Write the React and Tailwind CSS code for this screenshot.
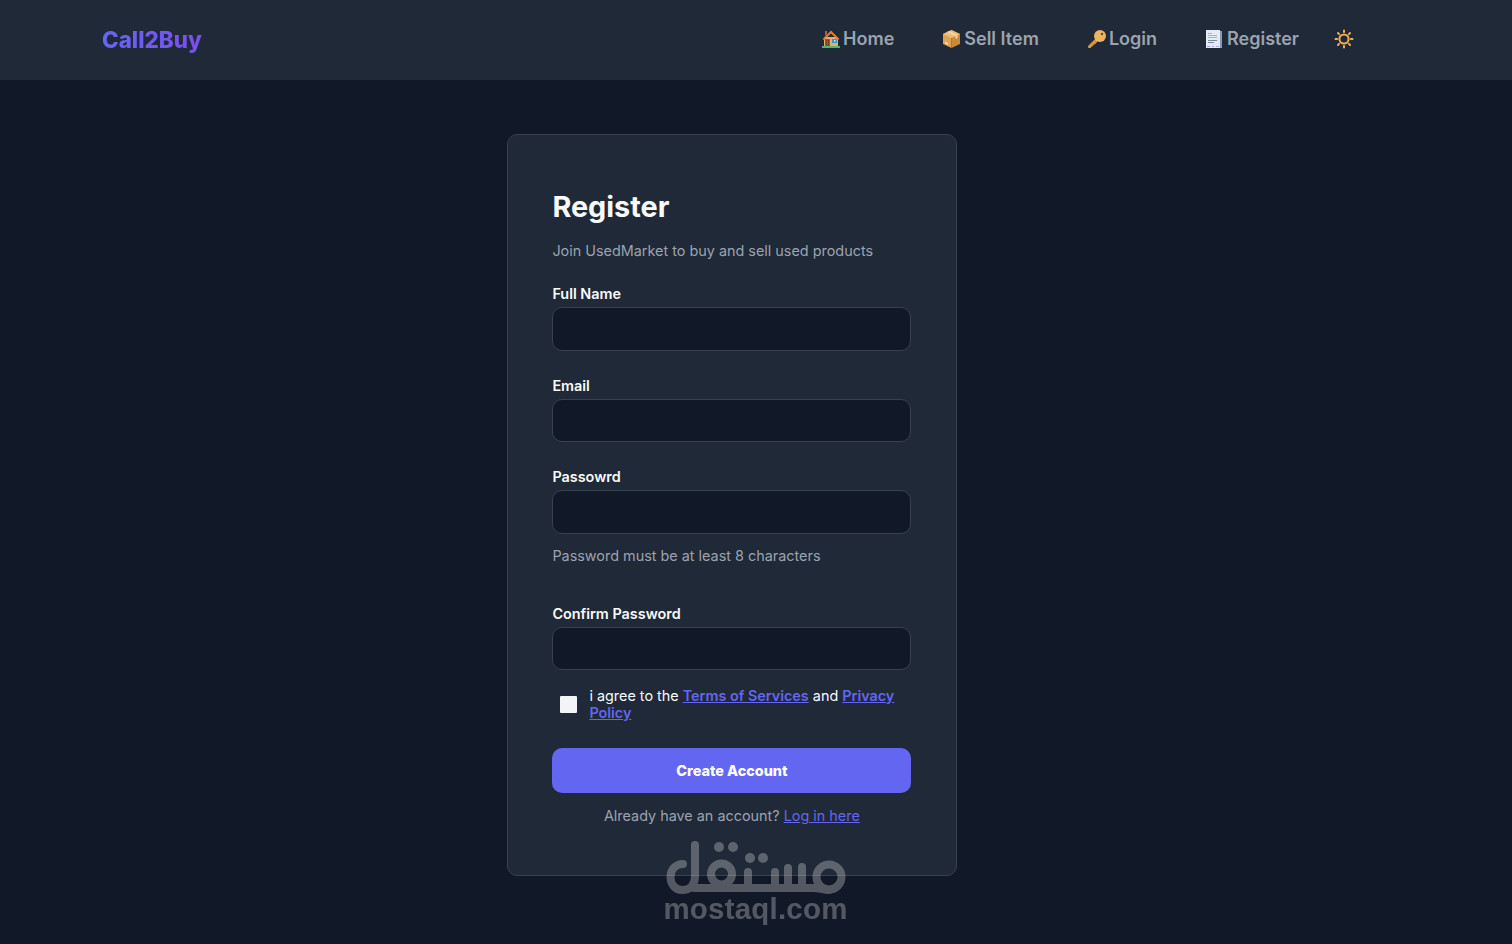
function Field({ label, hint, className = '' }) {
  return (
    <div className={className}>
      <label className="block text-[14.4px] leading-[17px] font-semibold text-[#f9fafb] mb-[5px]">{label}</label>
      <input className="block w-full h-[43.5px] rounded-[10px] border border-[#374151] bg-[#111827] px-3 outline-none" />
      {hint && <p className="mt-[11px] text-[14.4px] leading-[21px] text-[#9ca3af]">{hint}</p>}
    </div>
  )
}

function HouseIcon() {
  return (
    <svg width="20" height="20" viewBox="0 0 20 20">
      <rect x="1" y="17" width="18" height="2" fill="#4fb56f" />
      <rect x="3" y="8" width="14" height="9" fill="#e6ae68" />
      <path d="M1.5 10 10 1.5l8.5 8.5-1.5 1L10 4.5 3 11z" fill="#e9782f" />
      <path d="M4 2h2v3L4 7z" fill="#c9582a" />
      <rect x="4" y="10" width="5" height="7" fill="#8d5a34" />
      <path d="M5 11h1v1H5zM7 11h1v1H7zM5 13h1v1H5zM7 13h1v1H7zM5 15h1v1H5zM7 15h1v1H7z" fill="#5c3821" />
      <rect x="11" y="10" width="5" height="4" fill="#3f8fd6" />
      <rect x="13" y="11" width="1.5" height="1.5" fill="#d9ecfb" />
    </svg>
  )
}

function BoxIcon() {
  return (
    <svg width="19" height="20" viewBox="0 0 19 20">
      <path d="M9.5 1 18 5v10l-8.5 4z" fill="#c98a3c" />
      <path d="M9.5 1 1 5v10l8.5 4z" fill="#e0a352" />
      <path d="M1 5l8.5 4L18 5 9.5 1z" fill="#eebd78" />
      <path d="M5 3 13.5 7v3l2-1V6L7 2z" fill="#f3d5a4" />
      <path d="M9.5 9v10" stroke="#a96f2b" strokeWidth=".6" />
      <path d="M3 12.5l3 1.5v2l-3-1.5z" fill="#f4e6cf" />
    </svg>
  )
}

function KeyIcon() {
  return (
    <svg width="20" height="20" viewBox="0 0 20 20">
      <path d="M8.5 9.5 1 17l.3 2h2.5l.7-1.4 1.5-.3.4-1.6 1.6-.4L11 12z" fill="#d9963e" />
      <circle cx="13" cy="7" r="6" fill="#efb45f" />
      <circle cx="15" cy="5" r="1.2" fill="#6b4a20" />
    </svg>
  )
}

function ReceiptIcon() {
  return (
    <svg width="18" height="20" viewBox="0 0 18 20">
      <rect x="13" y="2" width="4" height="17" fill="#8f98a8" />
      <rect x="1" y="1" width="14" height="18" fill="#e3ebf6" />
      <path d="M3 4h4v1H3zM3 6h9v1H3zM3 8h9v1H3z" fill="#a8b4c8" />
      <path d="M3 11h9v1H3zM3 13h6v1H3z" fill="#7f8a9e" />
      <path d="M2 17h3v1H2zM7 17h2v1H7z" fill="#b49be0" />
      <path d="M11 17h3v1h-3z" fill="#9fb6e8" />
    </svg>
  )
}

function NavItem({ icon, label }) {
  return (
    <a className="flex items-center text-[18px] leading-[28px] font-semibold text-[#9ca3af]">
      <span className="flex w-[22px] shrink-0">{icon}</span>
      <span>{label}</span>
    </a>
  )
}

function SunIcon() {
  return (
    <svg width="20" height="20" viewBox="0 0 20 20" fill="none" stroke="#f2ae50" strokeWidth="2" strokeLinecap="round" className="-ml-[13px]">
      <circle cx="10" cy="10" r="4.6" />
      <path d="M10 1.5v1.6M10 16.9v1.6M1.5 10h1.6M16.9 10h1.6M4 4l1.1 1.1M14.9 14.9 16 16M4 16l1.1-1.1M14.9 5.1 16 4" />
    </svg>
  )
}

function Watermark() {
  return (
    <div className="absolute left-[664px] top-[838px] w-[183px] flex flex-col items-center pointer-events-none opacity-30">
      <svg width="183" height="58" viewBox="0 0 183 58" fill="none" stroke="#ededed" strokeWidth="8" strokeLinecap="round" strokeLinejoin="round">
        <path d="M31 7V38C31 47 26 52 18 52C11 52 6.5 46 6.5 39C6.5 31 12 26 19 26" />
        <circle cx="57.5" cy="36" r="10.5" />
        <path d="M30 50H150C156 50 160 52 165 52" />
        <path d="M84 34V50M111 34V50M124 30V50M138 29V50" />
        <circle cx="165" cy="39" r="12.5" />
        <g fill="#ededed" stroke="none">
          <circle cx="55" cy="9" r="5" />
          <circle cx="69" cy="9" r="5" />
          <circle cx="86" cy="20" r="5" />
          <circle cx="99" cy="20" r="5" />
        </g>
      </svg>
      <span className="-mt-px whitespace-nowrap font-['Liberation_Sans',sans-serif] text-[29.4px] leading-[28px] font-bold tracking-[0.25px] text-[#ededed]">mostaql.com</span>
    </div>
  )
}

export default function App() {
  return (
    <div className="relative min-h-[944px] bg-[#111827] font-['Inter',sans-serif]">
      <header className="h-20 bg-[#1f2937] flex items-center justify-between pl-[102px] pr-[158px]">
        <span className="text-[22.4px] leading-[32px] font-extrabold bg-linear-to-r from-[#6366f1] to-[#7c4df0] bg-clip-text text-transparent">Call2Buy</span>
        <nav className="flex items-center gap-12 -mt-[2px]">
          <NavItem icon={<HouseIcon />} label="Home" />
          <NavItem icon={<BoxIcon />} label="Sell Item" />
          <NavItem icon={<KeyIcon />} label="Login" />
          <NavItem icon={<ReceiptIcon />} label="Register" />
          <SunIcon />
        </nav>
      </header>

      <main className="flex justify-center pt-[54px] pr-[48px]">
        <div className="w-[450px] h-[742px] rounded-[10px] border border-[#374151] bg-[#1f2937] pl-[44.4px] pr-[44.6px] pt-[54px]">
          <h1 className="text-[28.8px] leading-[36px] font-bold text-[#f9fafb]">Register</h1>
          <p className="mt-[15px] text-[14.4px] leading-[21px] text-[#9ca3af]">Join UsedMarket to buy and sell used products</p>
          <Field label="Full Name" className="mt-[24.25px]" />
          <Field label="Email" className="mt-[26px]" />
          <Field label="Passowrd" hint="Password must be at least 8 characters" className="mt-[26px]" />
          <Field label="Confirm Password" className="mt-[38.75px]" />

          <div className="mt-[17px] flex items-center">
            <span className="ml-2 w-[17px] h-[17px] shrink-0 bg-[#f3f4f6] rounded-[1px]" />
            <p className="ml-3 text-[14.4px] leading-[17px] text-[#f9fafb]">
              i agree to the <a className="font-semibold text-[#6366f1] underline">Terms of Services</a> and <a className="font-semibold text-[#6366f1] underline">Privacy Policy</a>
            </p>
          </div>

          <button className="mt-[27px] w-full h-[45px] rounded-[10px] bg-[#6366f1] text-[14.4px] font-extrabold text-white">Create Account</button>

          <p className="mt-[12px] text-center text-[14.4px] leading-[21px] text-[#9ca3af]">
            Already have an account? <a className="text-[#6366f1] underline">Log in here</a>
          </p>
        </div>
      </main>

      <Watermark />
    </div>
  )
}
